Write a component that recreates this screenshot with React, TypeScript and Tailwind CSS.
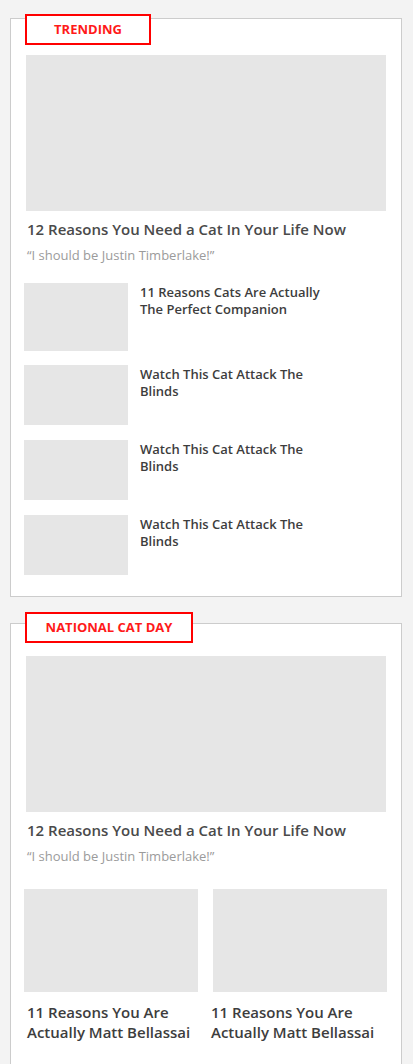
import React from "react";

const font = { fontFamily: '"Open Sans", "Liberation Sans", sans-serif' };

function Label({ text, className }: { text: string; className: string }) {
  return (
    <div
      className={`ml-[14px] flex h-[31px] items-center justify-center border-2 border-[#ff0000] bg-white text-[13px] font-bold uppercase text-[#ff1a1a] ${className}`}
    >
      {text}
    </div>
  );
}

function Hero() {
  return (
    <div className="px-[15px]">
      <div className="h-[156px] bg-[#e6e6e6]" />
      <div className="mt-[8px] pl-[1px] text-[15px] font-semibold leading-[20px] text-[#4a4a4a]">
        12 Reasons You Need a Cat In Your Life Now
      </div>
      <div className="mt-[7px] pl-[1px] text-[13px] leading-[18px] text-[#9b9b9b]">
        “I should be Justin Timberlake!”
      </div>
    </div>
  );
}

function Row({ title, h, className = "" }: { title: string; h: string; className?: string }) {
  return (
    <div className={`flex gap-[12px] ${className}`}>
      <div className={`w-[104px] shrink-0 bg-[#e6e6e6] ${h}`} />
      <div className="w-[190px] pt-[1px] text-[13px] font-semibold leading-[17px] text-[#3d3d3d]">
        {title}
      </div>
    </div>
  );
}

export default function App() {
  return (
    <div className="min-h-[1064px] bg-[#f3f3f3] pt-[18px]" style={font}>
      <div className="ml-[10px] w-[392px] border border-[#cccccc] bg-white pb-[21px]">
        <Label text="Trending" className="-mt-[5px] w-[126px]" />
        <div className="mt-[10px]">
          <Hero />
        </div>
        <div className="mt-[19px] flex flex-col gap-[15px] pl-[13px]">
          <Row title="11 Reasons Cats Are Actually The Perfect Companion" h="h-[68px]" className="-mb-[1px]" />
          <Row title="Watch This Cat Attack The Blinds" h="h-[60px]" />
          <Row title="Watch This Cat Attack The Blinds" h="h-[60px]" />
          <Row title="Watch This Cat Attack The Blinds" h="h-[60px]" />
        </div>
      </div>

      <div className="ml-[10px] mt-[26px] w-[392px] border border-[#cccccc] bg-white pb-[30px]">
        <Label text="National Cat Day" className="-mt-[12px] h-[30px] w-[168px]" />
        <div className="mt-[13px]">
          <Hero />
        </div>
        <div className="mt-[24px] grid grid-cols-2 gap-[15px] pl-[13px] pr-[14px]">
          {[0, 1].map((i) => (
            <div key={i}>
              <div className="h-[103px] bg-[#e6e6e6]" />
              <div className={`mt-[10px] text-[15px] font-semibold leading-[20px] text-[#3d3d3d] ${i === 0 ? "pl-[3px]" : "-ml-[2px]"}`}>
                11 Reasons You Are Actually Matt Bellassai
              </div>
            </div>
          ))}
        </div>
      </div>
    </div>
  );
}
